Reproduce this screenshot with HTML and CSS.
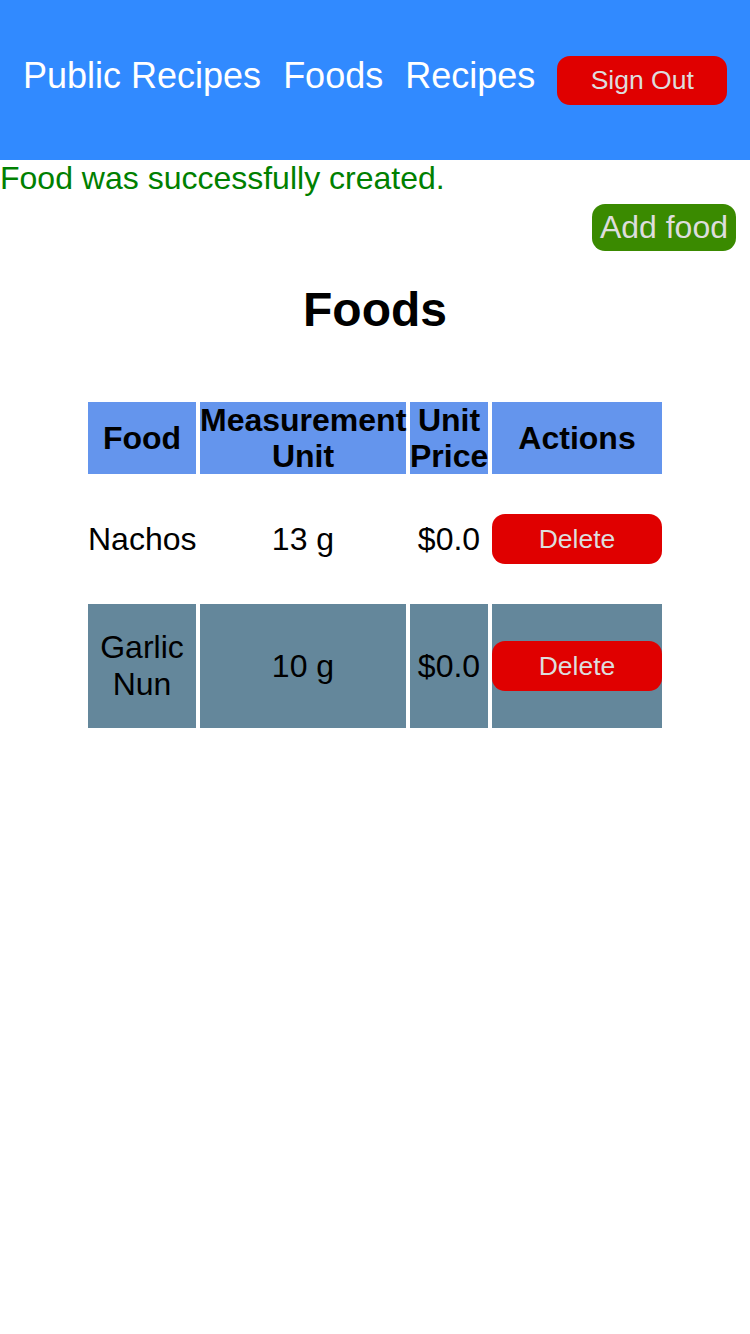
FILE: index.html
```html
<!DOCTYPE html>
<html lang="en">
<head>
<meta charset="utf-8">
<title>Foods</title>
<link rel="stylesheet" href="styles.css">
</head>
<body>
<nav class="navbar">
  <a class="nav-link" href="#">Public Recipes</a>
  <a class="nav-link" href="#">Foods</a>
  <a class="nav-link" href="#">Recipes</a>
  <button class="btn btn-red btn-signout">Sign Out</button>
</nav>
<p class="flash">Food was successfully created.</p>
<div class="toolbar">
  <button class="btn btn-green">Add food</button>
</div>
<h1 class="title">Foods</h1>
<table class="foods">
  <colgroup>
    <col class="c-food">
    <col class="c-unit">
    <col class="c-price">
    <col class="c-actions">
  </colgroup>
  <thead>
    <tr>
      <th>Food</th>
      <th>Measurement Unit</th>
      <th>Unit Price</th>
      <th>Actions</th>
    </tr>
  </thead>
  <tbody>
    <tr class="row">
      <td>Nachos</td>
      <td>13 g</td>
      <td>$0.0</td>
      <td><button class="btn btn-red btn-delete">Delete</button></td>
    </tr>
    <tr class="row row-alt">
      <td>Garlic Nun</td>
      <td>10 g</td>
      <td>$0.0</td>
      <td><button class="btn btn-red btn-delete">Delete</button></td>
    </tr>
  </tbody>
</table>
</body>
</html>
```
FILE: styles.css
```css
html, body {
  margin: 0;
  padding: 0;
  background: #ffffff;
  font-family: "Liberation Sans", Arial, sans-serif;
  color: #000;
}

.navbar {
  height: 160px;
  background: #318aff;
  display: flex;
  align-items: center;
  padding-left: 23px;
  padding-bottom: 9px;
  gap: 22px;
  box-sizing: border-box;
}

.nav-link {
  color: #ffffff;
  text-decoration: none;
  font-size: 36px;
}

.btn {
  font-family: "Liberation Sans", Arial, sans-serif;
  border: none;
  color: #dddddd;
  cursor: pointer;
  line-height: normal;
}

.btn-red {
  background: #e00000;
}

.btn-signout {
  font-size: 26.5px;
  width: 170px;
  height: 49px;
  border-radius: 13px;
  margin-top: 10px;
  padding: 0;
}

.flash {
  margin: 0;
  color: #008000;
  font-size: 32px;
}

.toolbar {
  display: flex;
  justify-content: flex-end;
  padding-right: 14px;
  margin-top: 7px;
}

.btn-green {
  background: #3a8a00;
  font-size: 32px;
  padding: 4px 8px;
  height: 47px;
  border-radius: 13px;
}

.title {
  text-align: center;
  font-size: 48px;
  font-weight: bold;
  margin: 31px 0 61px;
}

.foods {
  margin: 0 auto;
  border-spacing: 4px;
  table-layout: fixed;
  width: 582px;
  font-size: 32px;
}

.c-food { width: 108px; }
.c-unit { width: 206px; }
.c-price { width: 78px; }
.c-actions { width: 170px; }

.foods th {
  background: #6495ed;
  font-weight: bold;
  padding: 0;
  line-height: 36px;
  text-align: center;
  vertical-align: middle;
}

.foods td {
  padding: 25px 0;
  text-align: center;
  vertical-align: middle;
}

.row-alt td {
  background: #64879b;
}

.btn-delete {
  display: block;
  width: 100%;
  height: 50px;
  font-size: 26.5px;
  border-radius: 13px;
  padding: 0;
  margin: 0;
}

.row:not(.row-alt) .btn-delete {
  margin: 11px 0;
}
```
